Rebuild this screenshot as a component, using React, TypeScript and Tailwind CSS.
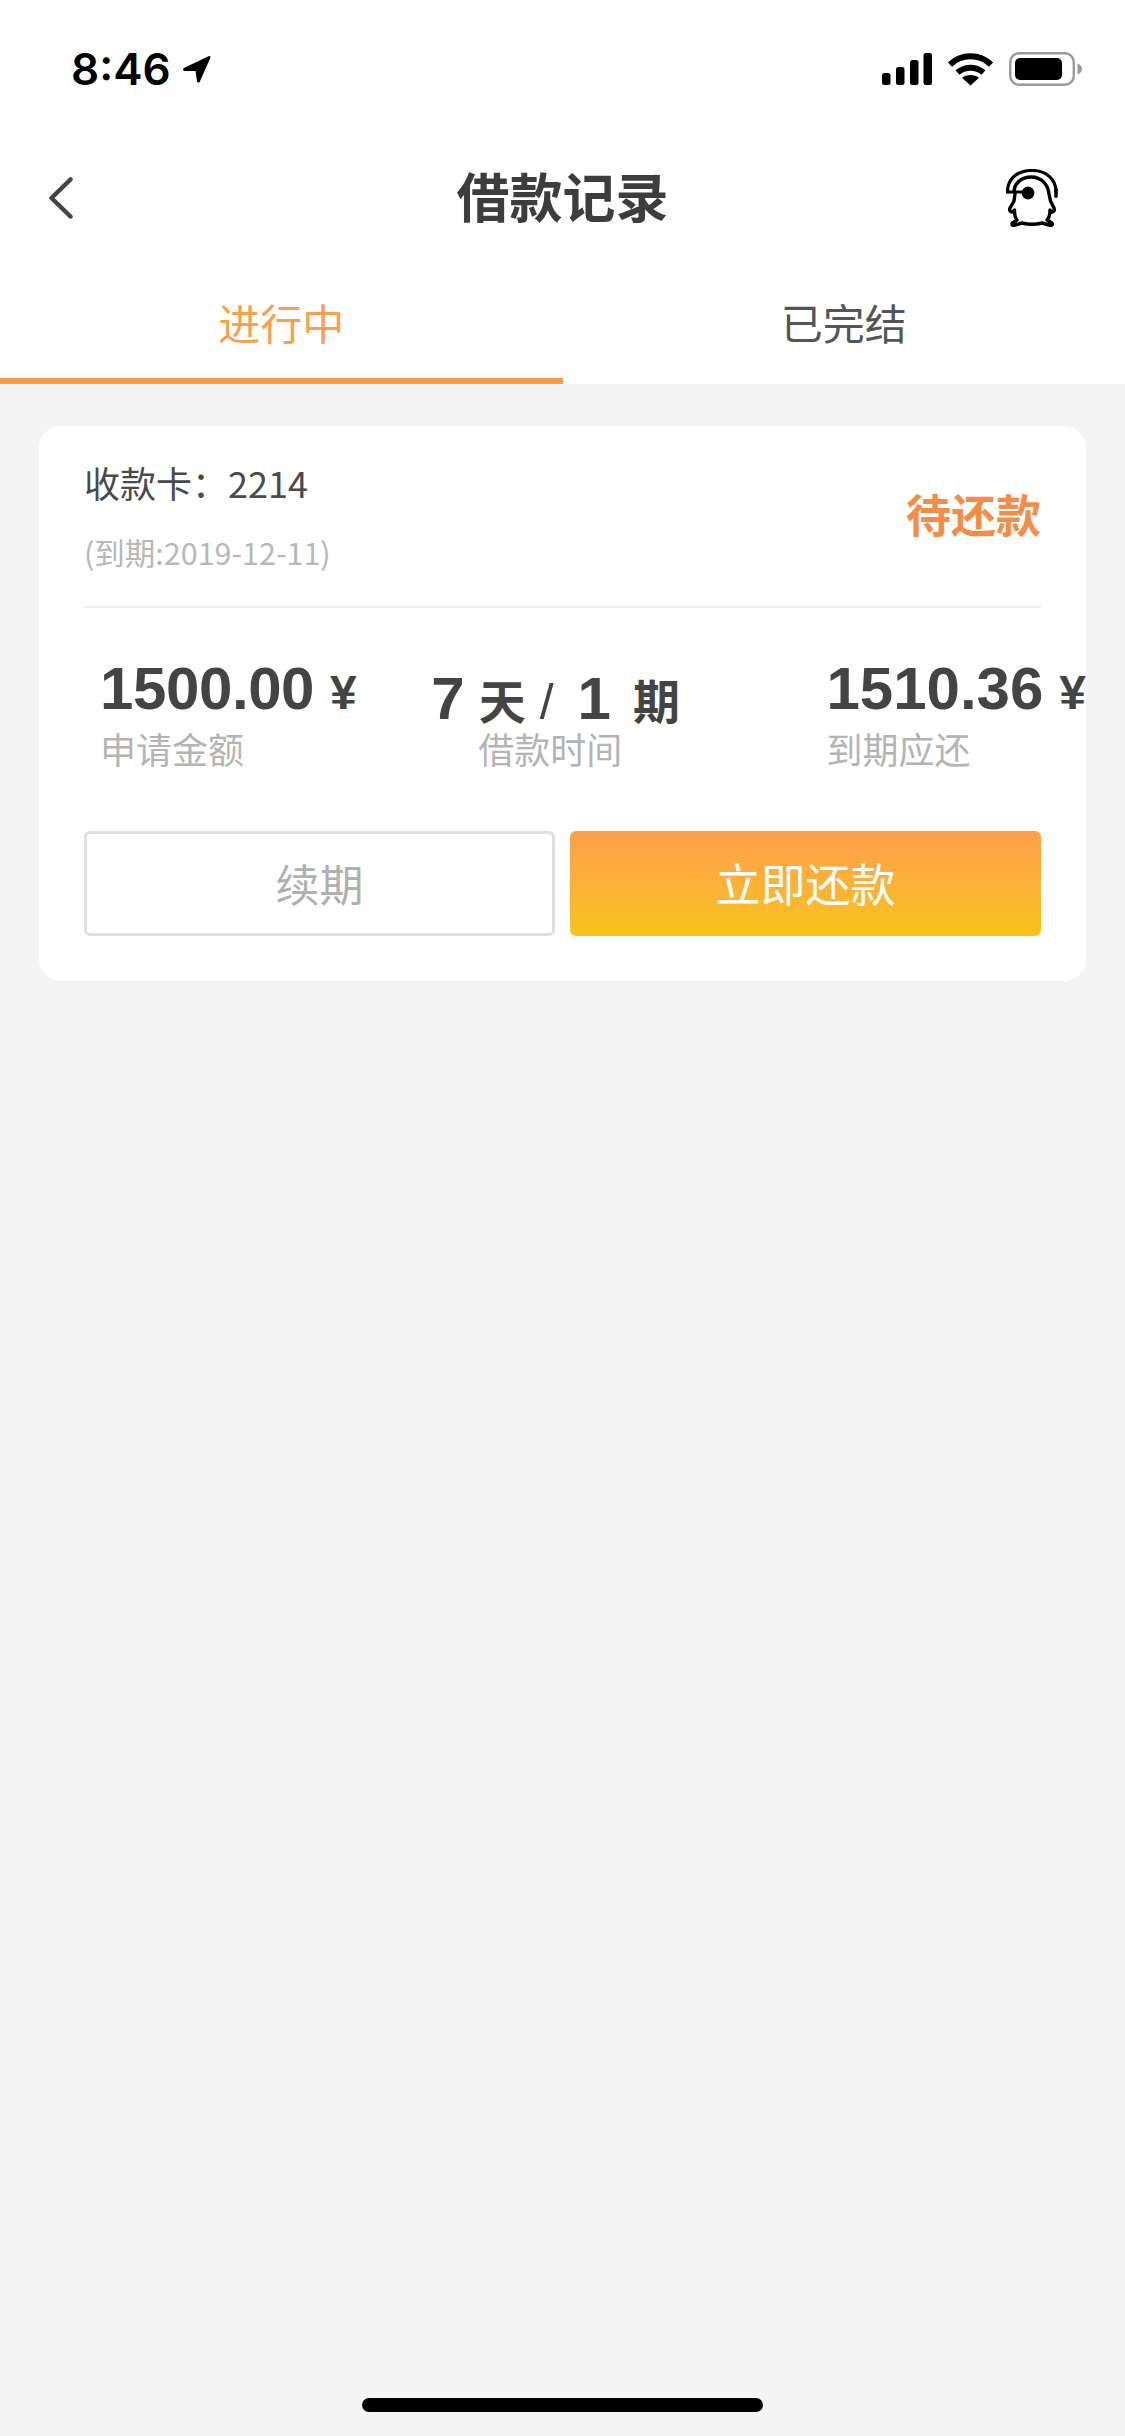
const SANS = "font-['Liberation_Sans','Noto_Sans_CJK_SC',sans-serif]";
const CJK = "font-['Noto_Sans_CJK_SC',sans-serif]";

function Signal() {
  return (
    <svg width="50" height="32" viewBox="0 0 50 32" fill="#000">
      <rect x="0" y="20" width="8.5" height="12" rx="2.5" />
      <rect x="14" y="14" width="8.5" height="18" rx="2.5" />
      <rect x="28" y="7" width="8.5" height="25" rx="2.5" />
      <rect x="41.5" y="0" width="8.5" height="32" rx="2.5" />
    </svg>
  );
}

function Wifi() {
  return (
    <svg width="45" height="33" viewBox="0 0 45 33" fill="none">
      <path d="M2 11.5 C13.5 0.5 31.5 0.5 43 11.5" stroke="#000" strokeWidth="6" />
      <path d="M9.5 19.5 C17 13 28 13 35.5 19.5" stroke="#000" strokeWidth="6" />
      <path d="M22.5 32.5 L14 24.8 C18.5 21 26.5 21 31 24.8 Z" fill="#000" />
    </svg>
  );
}

function Battery() {
  return (
    <svg width="73" height="34" viewBox="0 0 73 34" fill="none">
      <rect x="1.2" y="1.2" width="63.6" height="31.6" rx="9" stroke="#9a9a9a" strokeWidth="2.4" />
      <rect x="6" y="6" width="47" height="22" rx="5" fill="#000" />
      <path d="M68.5 11.5 C71.5 12.5 73 14.5 73 17 C73 19.5 71.5 21.5 68.5 22.5 Z" fill="#9a9a9a" />
    </svg>
  );
}

function LocationArrow() {
  return (
    <svg width="30" height="30" viewBox="0 0 31 31" fill="#000">
      <path d="M2 14.5 L27.5 2.2 C29 1.6 29.8 2.6 29.3 4 L18.5 28.5 C17.8 30 15.8 29.8 15.5 28.2 L14 17.5 L2.5 17.5 C0.8 17.3 0.6 15.3 2 14.5 Z" />
    </svg>
  );
}

function Penguin() {
  return (
    <svg width="52" height="58" viewBox="0 0 52 58" fill="none" stroke="#000" strokeLinecap="round" strokeLinejoin="round">
      <path d="M1.5 23 C1.5 9 12 1.5 26 1.5 C40 1.5 50 10 50 23" strokeWidth="3.2" />
      <path d="M49 20 L51 20 L51 28 L49 28 Z" strokeWidth="1.5" fill="#000" />
      <path d="M8 23 C8 14 16 8 25 8 C36 8 42 16 43 25 L44.5 32 L48 39 C49 42 47 44 45 42 L44 41 C44 46 43 49 41 51 L46 54 C47.5 56 45 57 43 56 L36 54 C30 55.5 22 55.5 16 54 L9 56 C6.5 57 5 55.5 6.5 54 L11 51 C9 49 8.5 46 8.5 41 L7 42.5 C4.5 44 3 41.5 4 39 L8 32 L9 25" strokeWidth="3.4" />
      <path d="M1.5 23 L17 23" strokeWidth="3.2" />
      <circle cx="22" cy="24" r="6.4" fill="#000" stroke="none" />
    </svg>
  );
}

function StatusBar() {
  return (
    <div className="flex h-[135px] items-start justify-between pl-[71px] pr-[43px] pt-[48px]">
      <div className="flex items-center gap-[11px]">
        <span className="font-['Inter',sans-serif] text-[44px] font-semibold leading-[42px] text-black">8:46</span>
        <LocationArrow />
      </div>
      <div className="mt-[4px] flex items-center gap-[16px]">
        <Signal />
        <Wifi />
        <Battery />
      </div>
    </div>
  );
}

function NavBar() {
  return (
    <div className="grid h-[126px] grid-cols-[1fr_auto_1fr] items-center px-[49px]">
      <svg width="24" height="42" viewBox="0 0 24 42" fill="none" stroke="#444" strokeWidth="4.5" strokeLinecap="round" strokeLinejoin="round">
        <path d="M21.5 2.5 L2.5 21 L21.5 39.5" />
      </svg>
      <h1 className={`${CJK} mb-[5px] text-[53px] font-bold leading-none text-[#3d3d3d]`}>借款记录</h1>
      <div className="flex justify-end pr-[18px]">
        <Penguin />
      </div>
    </div>
  );
}

function Tabs() {
  return (
    <div className={`${CJK} flex h-[123px] bg-white text-[42px]`}>
      <div className="flex flex-1 items-center justify-center border-b-[6px] border-[#fb9a47] pt-[4px] text-[#fb9f4d]">进行中</div>
      <div className="flex flex-1 items-center justify-center border-b-[6px] border-transparent pt-[4px] text-[#555555]">已完结</div>
    </div>
  );
}

function Card() {
  const value = "h-[62px] whitespace-nowrap font-bold leading-[62px] text-[#444444]";
  const label = `${CJK} text-[36px] leading-[50px] text-[#b4b4b4]`;
  return (
    <div className="overflow-hidden rounded-[22px] bg-white px-[45px] pb-[45px]">
      <div className="flex h-[182px] items-center justify-between border-b-2 border-[#f1f1f1] pb-[3px]">
        <div className={CJK}>
          <div className="text-[36px] leading-[50px] text-[#4a4a4a]">收款卡：2214</div>
          <div className="mt-[25px] text-[30.5px] leading-[40px] text-[#b8b8b8]">(到期:2019-12-11)</div>
        </div>
        <div className={`${CJK} mb-[3px] text-[45px] font-bold leading-none text-[#f58d48]`}>待还款</div>
      </div>
      <div className="-mr-[45px] flex pt-[50px]">
        <div className="ml-[16px] w-[332px]">
          <div className={value}>
            <span className="text-[60px] tracking-[-0.4px]">1500.00</span>
            <span className="ml-[16px] text-[48px]">¥</span>
          </div>
          <div className={`mt-[3px] ${label}`}>申请金额</div>
        </div>
        <div className="w-[396px]">
          <div className="mt-[16px] h-[49px] whitespace-nowrap font-bold leading-[49px] text-[#444444]">
            <span className="text-[60px]">7</span>
            <span className={`${CJK} ml-[14px] text-[47px]`}>天</span>
            <span className="ml-[14px] text-[50px] font-normal">/</span>
            <span className="ml-[24px] text-[60px]">1</span>
            <span className={`${CJK} ml-[22px] text-[47px]`}>期</span>
          </div>
          <div className={`ml-[47px] ${label}`}>借款时间</div>
        </div>
        <div className="w-[260px]">
          <div className={value}>
            <span className="text-[60px]">1510.36</span>
            <span className="ml-[16px] text-[48px]">¥</span>
          </div>
          <div className={`mt-[3px] ${label}`}>到期应还</div>
        </div>
      </div>
      <div className={`${CJK} mt-[58px] flex gap-[15px]`}>
        <button className="flex h-[105px] w-[471px] items-center justify-center rounded-[6px] border-[3px] border-[#e0e0e0] pb-[2px] text-[44px] text-[#b0b0b0]">续期</button>
        <button className="flex h-[105px] w-[471px] items-center justify-center rounded-[6px] bg-gradient-to-b from-[#fd9f4b] to-[#f9c315] pb-[2px] text-[45px] text-white">立即还款</button>
      </div>
    </div>
  );
}

export default function App() {
  return (
    <div className={`flex h-[2436px] w-[1125px] flex-col overflow-hidden bg-[#f4f4f4] ${SANS}`}>
      <div className="bg-white">
        <StatusBar />
        <NavBar />
        <Tabs />
      </div>
      <div className="px-[39px] pt-[42px]">
        <Card />
      </div>
      <div className="mt-auto flex justify-center pb-[24px]">
        <div className="h-[14px] w-[401px] rounded-full bg-black" />
      </div>
    </div>
  );
}
